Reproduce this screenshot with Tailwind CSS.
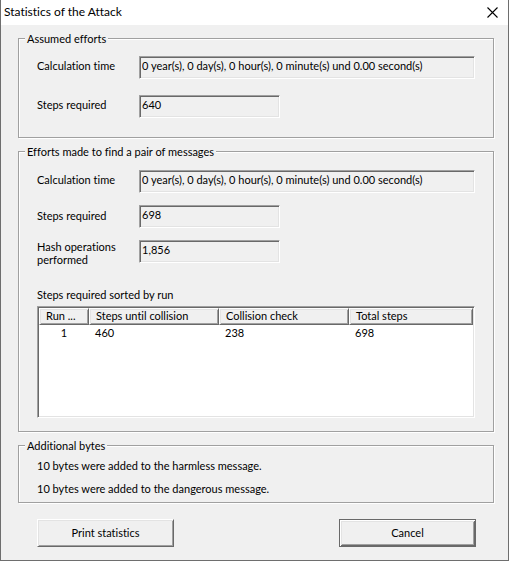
<!DOCTYPE html>
<html lang="en">
<head>
<meta charset="utf-8">
<meta name="viewport" content="width=device-width, initial-scale=1">
<title>Statistics of the Attack</title>
<script src="https://cdn.jsdelivr.net/npm/@tailwindcss/browser@4"></script>
</head>
<body class="flex min-h-screen flex-col border border-t-0 border-[#6e6e6e] bg-[#f0f0f0] font-[Lato,Arial,sans-serif] text-[11px] leading-[13px] text-black [font-variant-ligatures:none]">
  <header class="flex h-[25px] items-center justify-between bg-white pb-px pl-[3px] pr-[9px]">
    <h1 class="text-[12px] leading-[16px]">Statistics of the Attack</h1>
    <button type="button" aria-label="Close" class="flex size-[13px] items-center justify-center">
      <svg class="size-[11px]" viewBox="0 0 11 11" fill="none" stroke="#000" stroke-width="1.1" aria-hidden="true"><path d="M.5 .5l10 10M10.5 .5l-10 10"/></svg>
    </button>
  </header>

  <main class="flex flex-1 flex-col pb-[13px] pl-[17px] pr-[14px] pt-[7px]">
    <form class="flex flex-1 flex-col">
      <fieldset class="min-w-0 border border-[#a0a0a0] px-[18px] pb-[19px] shadow-[1px_1px_0_#fff,inset_1px_1px_0_#fff]">
        <legend class="-ml-[12px] bg-[#f0f0f0] px-[2px]">Assumed efforts</legend>
        <div class="grid grid-cols-[102px_1fr] gap-y-[16px] pt-[11px]">
          <label for="a-time" class="pt-[3px]">Calculation time</label>
          <input id="a-time" readonly value="0 year(s), 0 day(s), 0 hour(s), 0 minute(s) und 0.00 second(s)" class="h-[23px] w-full min-w-0 border border-b-white border-l-[#a0a0a0] border-r-white border-t-[#a0a0a0] bg-[#f0f0f0] px-[2px] pb-[4px] shadow-[inset_1px_1px_0_#696969,inset_-1px_-1px_0_#e3e3e3] outline-none">
          <label for="a-steps" class="pt-[3px]">Steps required</label>
          <input id="a-steps" readonly value="640" class="h-[23px] w-[141px] border border-b-white border-l-[#a0a0a0] border-r-white border-t-[#a0a0a0] bg-[#f0f0f0] px-[2px] pb-[4px] shadow-[inset_1px_1px_0_#696969,inset_-1px_-1px_0_#e3e3e3] outline-none">
        </div>
      </fieldset>

      <fieldset class="mt-[7px] min-w-0 border border-[#a0a0a0] px-[18px] pb-[13px] shadow-[1px_1px_0_#fff,inset_1px_1px_0_#fff]">
        <legend class="-ml-[12px] bg-[#f0f0f0] px-[2px]">Efforts made to find a pair of messages</legend>
        <div class="grid grid-cols-[102px_1fr] gap-y-[12px] pt-[12px]">
          <label for="b-time" class="pt-[3px]">Calculation time</label>
          <input id="b-time" readonly value="0 year(s), 0 day(s), 0 hour(s), 0 minute(s) und 0.00 second(s)" class="h-[23px] w-full min-w-0 border border-b-white border-l-[#a0a0a0] border-r-white border-t-[#a0a0a0] bg-[#f0f0f0] px-[2px] pb-[4px] shadow-[inset_1px_1px_0_#696969,inset_-1px_-1px_0_#e3e3e3] outline-none">
          <label for="b-steps" class="pt-[4px]">Steps required</label>
          <input id="b-steps" readonly value="698" class="h-[23px] w-[141px] border border-b-white border-l-[#a0a0a0] border-r-white border-t-[#a0a0a0] bg-[#f0f0f0] px-[2px] pb-[4px] shadow-[inset_1px_1px_0_#696969,inset_-1px_-1px_0_#e3e3e3] outline-none">
          <label for="b-hash">Hash operations<br>performed</label>
          <input id="b-hash" readonly value="1,856" class="h-[23px] w-[141px] border border-b-white border-l-[#a0a0a0] border-r-white border-t-[#a0a0a0] bg-[#f0f0f0] px-[2px] pb-[4px] shadow-[inset_1px_1px_0_#696969,inset_-1px_-1px_0_#e3e3e3] outline-none">
        </div>
        <h2 id="runs" class="mt-[22px]">Steps required sorted by run</h2>
        <div class="mt-[5px] min-h-[112px] border border-b-white border-l-[#a0a0a0] border-r-white border-t-[#a0a0a0] bg-white p-px shadow-[inset_1px_1px_0_#696969,inset_-1px_-1px_0_#e3e3e3]">
          <table aria-labelledby="runs" class="w-full table-fixed border-separate border-spacing-0 text-left">
            <colgroup><col class="w-[50px]"><col class="w-[130px]"><col class="w-[130px]"><col></colgroup>
            <thead>
              <tr class="h-[17px] bg-[#f0f0f0]">
                <th scope="col" class="border border-b-[#696969] border-l-white border-r-[#696969] border-t-white p-0 pb-[2px] pl-[6px] font-normal shadow-[inset_1px_1px_0_#e3e3e3,inset_-1px_-1px_0_#a0a0a0]">Run ...</th>
                <th scope="col" class="border border-b-[#696969] border-l-white border-r-[#696969] border-t-white p-0 pb-[2px] pl-[6px] font-normal shadow-[inset_1px_1px_0_#e3e3e3,inset_-1px_-1px_0_#a0a0a0]">Steps until collision</th>
                <th scope="col" class="border border-b-[#696969] border-l-white border-r-[#696969] border-t-white p-0 pb-[2px] pl-[6px] font-normal shadow-[inset_1px_1px_0_#e3e3e3,inset_-1px_-1px_0_#a0a0a0]">Collision check</th>
                <th scope="col" class="border border-b-[#696969] border-l-white border-r-[#696969] border-t-white p-0 pb-[2px] pl-[6px] font-normal shadow-[inset_1px_1px_0_#e3e3e3,inset_-1px_-1px_0_#a0a0a0]">Total steps</th>
              </tr>
            </thead>
            <tbody>
              <tr class="h-[17px]">
                <td class="p-0 pb-[2px] text-center">1</td>
                <td class="p-0 pb-[2px] pl-[6px]">460</td>
                <td class="p-0 pb-[2px] pl-[6px]">238</td>
                <td class="p-0 pb-[2px] pl-[6px]">698</td>
              </tr>
            </tbody>
          </table>
        </div>
      </fieldset>

      <fieldset class="mt-[7px] min-w-0 border border-[#a0a0a0] px-[18px] pb-[7px] shadow-[1px_1px_0_#fff,inset_1px_1px_0_#fff]">
        <legend class="-ml-[12px] bg-[#f0f0f0] px-[2px]">Additional bytes</legend>
        <p class="pt-[7px]">10 bytes were added to the harmless message.</p>
        <p class="pt-[10px]">10 bytes were added to the dangerous message.</p>
      </fieldset>

      <div class="mt-auto flex justify-between pl-[19px] pr-[18px] pt-[16px]">
        <button type="button" class="h-[28px] w-[137px] border border-b-[#696969] border-l-white border-r-[#696969] border-t-white bg-[#f0f0f0] pb-[2px] shadow-[inset_1px_1px_0_#e3e3e3,inset_-1px_-1px_0_#a0a0a0]">Print statistics</button>
        <button type="button" class="h-[28px] w-[137px] border border-[#696969] bg-[#f0f0f0] pb-[2px] shadow-[inset_1px_1px_0_#fff,inset_-1px_-1px_0_#696969,inset_2px_2px_0_#e3e3e3,inset_-2px_-2px_0_#a0a0a0]">Cancel</button>
      </div>
    </form>
  </main>
</body>
</html>
